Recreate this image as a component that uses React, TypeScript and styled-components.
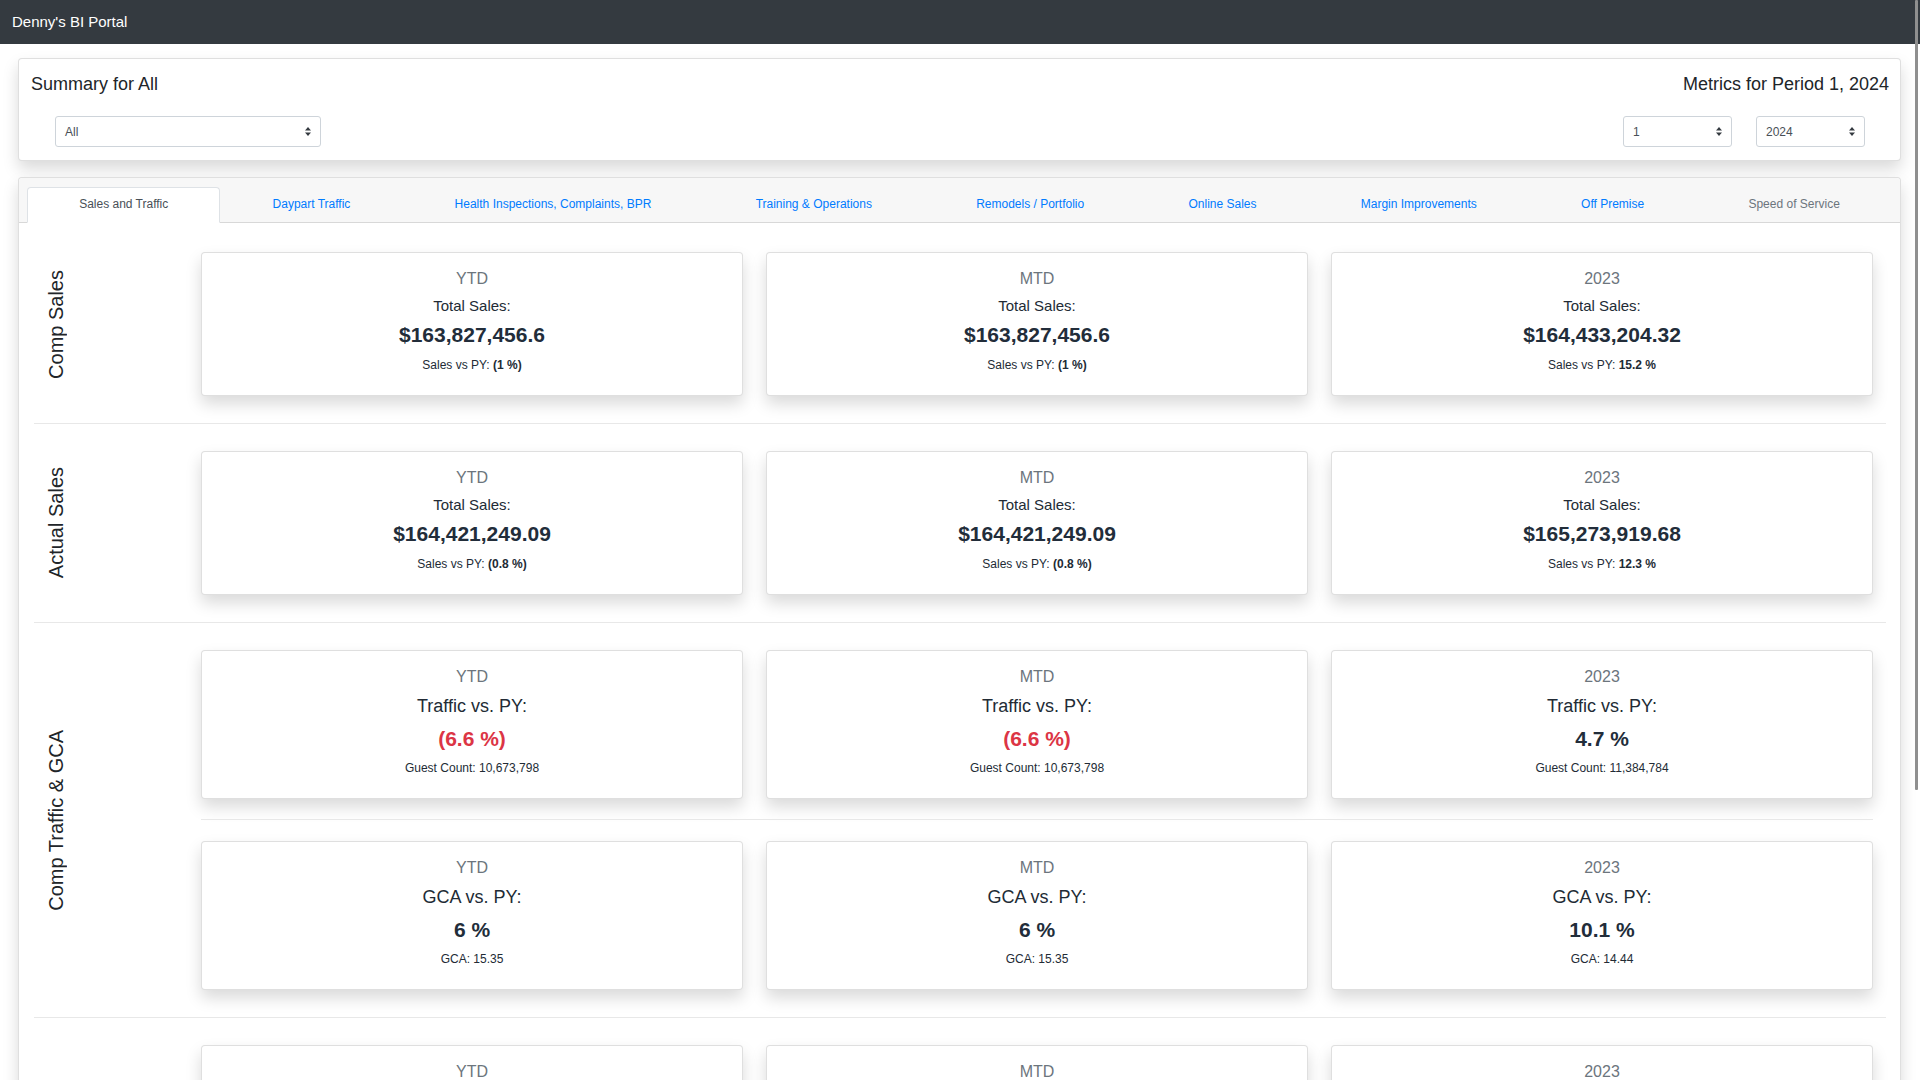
import React from "react";
import styled, { createGlobalStyle } from "styled-components";

const GlobalStyle = createGlobalStyle`
  * { box-sizing: border-box; }
  html, body { margin: 0; padding: 0; background: #fff; }
  body {
    font-family: "Liberation Sans", Arial, Helvetica, sans-serif;
    color: #212529;
  }
  ::-webkit-scrollbar { width: 0; }
`;

const ScrollThumb = styled.div`
  position: fixed;
  top: 0;
  right: 2px;
  width: 3px;
  height: 790px;
  background: #8f8f8f;
  border-radius: 1px;
  z-index: 10;
`;

const Navbar = styled.header`
  height: 44px;
  background: #343a40;
  display: flex;
  align-items: center;
  padding-left: 12px;
  padding-bottom: 1px;
  color: #fff;
  font-size: 15px;
`;

const Main = styled.main`
  padding: 14px 19px 30px 18px;
`;

const Panel = styled.section`
  background: #fff;
  border: 1px solid rgba(0, 0, 0, 0.125);
  border-radius: 4px;
  box-shadow: 0 0.5rem 1rem rgba(0, 0, 0, 0.15);
`;

const SummaryPanel = styled(Panel)`
  display: flex;
  justify-content: space-between;
  padding: 14px 11px 13px 12px;
`;

const FilterGroup = styled.div<{ $align: "start" | "end" }>`
  display: flex;
  flex-direction: column;
  align-items: ${(p) => (p.$align === "start" ? "flex-start" : "flex-end")};
`;

const FilterTitle = styled.h2`
  margin: 0;
  font-size: 18px;
  line-height: 22px;
  font-weight: 400;
  color: #212529;
`;

const SelectRow = styled.div`
  display: flex;
  gap: 24px;
  padding: 0 24px;
  margin-top: 21px;
`;

const SelectBox = styled.div<{ $width: number }>`
  width: ${(p) => p.$width}px;
  height: 31px;
  border: 1px solid #ced4da;
  border-radius: 3px;
  background: #fff;
  display: flex;
  align-items: center;
  justify-content: space-between;
  padding: 0 9px 0 9px;
  font-size: 12px;
  color: #495057;
`;

const TabsPanel = styled(Panel)`
  margin-top: 16px;
`;

const TabHeader = styled.div`
  background: #f7f7f7;
  border-bottom: 1px solid rgba(0, 0, 0, 0.125);
  border-radius: 4px 4px 0 0;
  padding: 9px 8px 0 8px;
`;

const TabList = styled.ul`
  display: flex;
  margin: 0 0 -1px 0;
  padding: 0;
  list-style: none;
`;

const Tab = styled.li<{ $state: "active" | "link" | "muted" }>`
  flex: 1 1 auto;
  text-align: center;
  padding: 7px 16px 9px;
  font-size: 12px;
  line-height: 18px;
  border: 1px solid transparent;
  border-radius: 4px 4px 0 0;
  white-space: nowrap;
  color: ${(p) =>
    p.$state === "active" ? "#495057" : p.$state === "link" ? "#007bff" : "#6c757d"};
  ${(p) =>
    p.$state === "active"
      ? `background:#fff; border-color:#dee2e6 #dee2e6 #fff;`
      : ""}
`;

const TabBody = styled.div`
  padding: 2px 14px 0 15px;
`;

const Section = styled.div`
  display: grid;
  grid-template-columns: 167px 1fr;
  padding: 27px 13px 27px 0;
  border-bottom: 1px solid #e8e8e8;
`;

const LabelCell = styled.div`
  display: flex;
  align-items: center;
  padding-left: 11px;
`;

const LabelText = styled.div`
  writing-mode: vertical-rl;
  transform: rotate(180deg);
  font-size: 20px;
  line-height: 23px;
  white-space: nowrap;
  color: #212529;
`;

const CardsColumn = styled.div`
  display: flex;
  flex-direction: column;
`;

const CardRow = styled.div`
  display: grid;
  grid-template-columns: repeat(3, 1fr);
  gap: 23px;
  & + & {
    margin-top: 20px;
    padding-top: 21px;
    border-top: 1px solid #e8e8e8;
  }
`;

const MetricCard = styled.div`
  background: #fff;
  border: 1px solid rgba(0, 0, 0, 0.125);
  border-radius: 4px;
  box-shadow: 0 0.5rem 1rem rgba(0, 0, 0, 0.15);
  text-align: center;
  padding: 15px 12px 21px;
`;

const Period = styled.div`
  font-size: 16px;
  line-height: 22px;
  color: #6c757d;
`;

const MetricTitle = styled.div<{ $big: boolean }>`
  font-size: ${(p) => (p.$big ? 18 : 15)}px;
  line-height: ${(p) => (p.$big ? 24 : 22)}px;
  margin-top: ${(p) => (p.$big ? 6 : 5)}px;
  color: #222b35;
`;

const MetricValue = styled.div<{ $negative: boolean; $big: boolean }>`
  font-size: 21px;
  line-height: 28px;
  font-weight: 700;
  margin-top: ${(p) => (p.$big ? 7 : 4)}px;
  color: ${(p) => (p.$negative ? "#dc3545" : "#222d3a")};
`;

const MetricSub = styled.div<{ $big: boolean }>`
  font-size: 12px;
  line-height: 18px;
  margin-top: ${(p) => (p.$big ? 6 : 7)}px;
  color: #222b35;
  strong { font-weight: 700; }
`;

const Caret = () => (
  <svg width="6" height="9" viewBox="0 0 6 9" aria-hidden="true">
    <path d="M3 0 L6 3.5 L0 3.5 Z" fill="#343a40" />
    <path d="M3 9 L6 5.5 L0 5.5 Z" fill="#343a40" />
  </svg>
);

const Select = ({ value, width }: { value: string; width: number }) => (
  <SelectBox $width={width}>
    <span>{value}</span>
    <Caret />
  </SelectBox>
);

type Metric = {
  period: string;
  title: string;
  value: string;
  negative?: boolean;
  subLabel: string;
  subValue: string;
  boldSub?: boolean;
};

const Card = ({ m, big }: { m: Metric; big: boolean }) => (
  <MetricCard>
    <Period>{m.period}</Period>
    <MetricTitle $big={big}>{m.title}</MetricTitle>
    <MetricValue $negative={!!m.negative} $big={big}>
      {m.value}
    </MetricValue>
    <MetricSub $big={big}>
      {m.subLabel} {m.boldSub ? <strong>{m.subValue}</strong> : m.subValue}
    </MetricSub>
  </MetricCard>
);

type SectionData = { label: string; big: boolean; rows: Metric[][] };

const sales = (period: string, value: string, py: string): Metric => ({
  period,
  title: "Total Sales:",
  value,
  subLabel: "Sales vs PY:",
  subValue: py,
  boldSub: true,
});

const sections: SectionData[] = [
  {
    label: "Comp Sales",
    big: false,
    rows: [
      [
        sales("YTD", "$163,827,456.6", "(1 %)"),
        sales("MTD", "$163,827,456.6", "(1 %)"),
        sales("2023", "$164,433,204.32", "15.2 %"),
      ],
    ],
  },
  {
    label: "Actual Sales",
    big: false,
    rows: [
      [
        sales("YTD", "$164,421,249.09", "(0.8 %)"),
        sales("MTD", "$164,421,249.09", "(0.8 %)"),
        sales("2023", "$165,273,919.68", "12.3 %"),
      ],
    ],
  },
  {
    label: "Comp Traffic & GCA",
    big: true,
    rows: [
      [
        { period: "YTD", title: "Traffic vs. PY:", value: "(6.6 %)", negative: true, subLabel: "Guest Count:", subValue: "10,673,798" },
        { period: "MTD", title: "Traffic vs. PY:", value: "(6.6 %)", negative: true, subLabel: "Guest Count:", subValue: "10,673,798" },
        { period: "2023", title: "Traffic vs. PY:", value: "4.7 %", subLabel: "Guest Count:", subValue: "11,384,784" },
      ],
      [
        { period: "YTD", title: "GCA vs. PY:", value: "6 %", subLabel: "GCA:", subValue: "15.35" },
        { period: "MTD", title: "GCA vs. PY:", value: "6 %", subLabel: "GCA:", subValue: "15.35" },
        { period: "2023", title: "GCA vs. PY:", value: "10.1 %", subLabel: "GCA:", subValue: "14.44" },
      ],
    ],
  },
  {
    label: "Actual Traffic & GCA",
    big: true,
    rows: [
      [
        { period: "YTD", title: "Traffic vs. PY:", value: "(6.1 %)", negative: true, subLabel: "Guest Count:", subValue: "10,712,406" },
        { period: "MTD", title: "Traffic vs. PY:", value: "(6.1 %)", negative: true, subLabel: "Guest Count:", subValue: "10,712,406" },
        { period: "2023", title: "Traffic vs. PY:", value: "3.9 %", subLabel: "Guest Count:", subValue: "11,408,215" },
      ],
      [
        { period: "YTD", title: "GCA vs. PY:", value: "7.4 %", subLabel: "GCA:", subValue: "15.35" },
        { period: "MTD", title: "GCA vs. PY:", value: "7.4 %", subLabel: "GCA:", subValue: "15.35" },
        { period: "2023", title: "GCA vs. PY:", value: "8.1 %", subLabel: "GCA:", subValue: "14.49" },
      ],
    ],
  },
];

const tabs: { label: string; state: "active" | "link" | "muted" }[] = [
  { label: "Sales and Traffic", state: "active" },
  { label: "Daypart Traffic", state: "link" },
  { label: "Health Inspections, Complaints, BPR", state: "link" },
  { label: "Training & Operations", state: "link" },
  { label: "Remodels / Portfolio", state: "link" },
  { label: "Online Sales", state: "link" },
  { label: "Margin Improvements", state: "link" },
  { label: "Off Premise", state: "link" },
  { label: "Speed of Service", state: "muted" },
];

export default function App() {
  return (
    <>
      <GlobalStyle />
      <ScrollThumb />
      <Navbar>Denny's BI Portal</Navbar>
      <Main>
        <SummaryPanel>
          <FilterGroup $align="start">
            <FilterTitle>Summary for All</FilterTitle>
            <SelectRow>
              <Select value="All" width={266} />
            </SelectRow>
          </FilterGroup>
          <FilterGroup $align="end">
            <FilterTitle>Metrics for Period 1, 2024</FilterTitle>
            <SelectRow>
              <Select value="1" width={109} />
              <Select value="2024" width={109} />
            </SelectRow>
          </FilterGroup>
        </SummaryPanel>

        <TabsPanel>
          <TabHeader>
            <TabList>
              {tabs.map((t) => (
                <Tab key={t.label} $state={t.state}>
                  {t.label}
                </Tab>
              ))}
            </TabList>
          </TabHeader>
          <TabBody>
            {sections.map((s) => (
              <Section key={s.label}>
                <LabelCell>
                  <LabelText>{s.label}</LabelText>
                </LabelCell>
                <CardsColumn>
                  {s.rows.map((row, i) => (
                    <CardRow key={i}>
                      {row.map((m) => (
                        <Card key={m.period + m.title} m={m} big={s.big} />
                      ))}
                    </CardRow>
                  ))}
                </CardsColumn>
              </Section>
            ))}
          </TabBody>
        </TabsPanel>
      </Main>
    </>
  );
}
